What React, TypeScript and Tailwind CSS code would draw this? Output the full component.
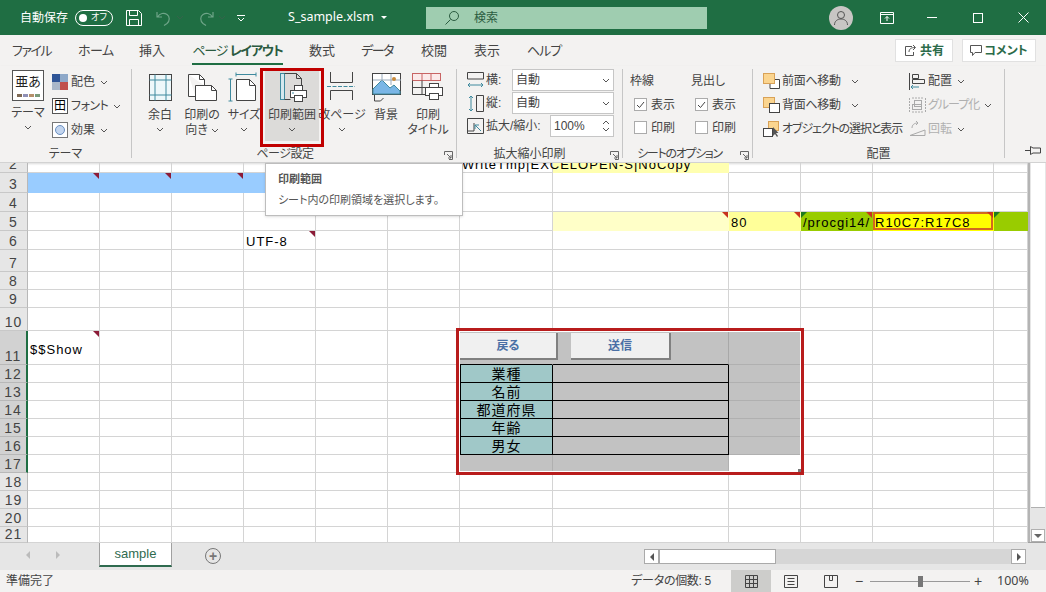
import type { ReactNode } from "react";

const ink = "#444";

function Chev({ className = "" }: { className?: string }) {
  return (
    <svg width="8" height="5" viewBox="0 0 8 5" className={className}>
      <path d="M1 1l3 3 3-3" fill="none" stroke="#555" strokeWidth="1" />
    </svg>
  );
}

function Launcher() {
  return (
    <svg width="9" height="9" viewBox="0 0 9 9" className="absolute right-[3px] bottom-[2px]">
      <path d="M.5 4V.5h8v8H5M3 3l4 4M7 4v3H4" fill="none" stroke="#666" strokeWidth="1" />
    </svg>
  );
}

function Icon({ children, w = 34, h = 34, className = "" }: { children: ReactNode; w?: number; h?: number; className?: string }) {
  return (
    <svg width={w} height={h} viewBox={`0 0 ${w} ${h}`} className={className} fill="none">
      {children}
    </svg>
  );
}

const line = "#444";
const teal = "#3f8a9e";

function MarginIcon() {
  return (
    <Icon>
      <rect x="6.500" y="3.500" width="22" height="26" fill="#eef8fa" stroke={line} />
      <path d="M6.500 9h22M6.500 24h22M12 3.500v26M23 3.500v26" stroke={teal} />
    </Icon>
  );
}
function OrientIcon() {
  return (
    <Icon>
      <path d="M3.500 3.500h11l5 5v6M3.500 3.500v22h7" stroke={line} fill="#fff" />
      <path d="M10.500 14.500h16l5 5v10h-21z" fill="#fff" stroke={line} />
      <path d="M26.500 14.500v5h5M14.500 3.500v5h5" stroke={line} />
    </Icon>
  );
}
function SizeIcon() {
  return (
    <Icon>
      <path d="M9.500 8.500h13l6 6v15h-19z" fill="#fff" stroke={line} />
      <path d="M22.500 8.500v6h6" stroke={line} />
      <path d="M9 3.500h20M9 1.500v4M29 1.500v4M3.500 8v22M1.500 8h4M1.500 30h4" stroke={teal} />
    </Icon>
  );
}
function AreaIcon() {
  return (
    <Icon>
      <rect x="5.500" y="2.500" width="4" height="26" fill="#d4e8ee" stroke={teal} />
      <path d="M9.500 2.500h12l5 5v11M9.500 28.500h6" stroke={line} />
      <path d="M21.500 2.500v5h5" stroke={line} />
      <rect x="19.500" y="14.500" width="8" height="5" fill="#fff" stroke={line} />
      <rect x="15.500" y="19.500" width="16" height="7" fill="#fff" stroke={line} />
      <rect x="19.500" y="24.500" width="8" height="6" fill="#fff" stroke={line} />
      <path d="M17 22h2" stroke={teal} />
    </Icon>
  );
}
function BreakIcon() {
  return (
    <Icon>
      <path d="M5.500 1v10.500h22V1M5.500 29V19.500h22V29" stroke={line} />
      <path d="M2 15.500h28" stroke={teal} strokeDasharray="4 1.500" />
    </Icon>
  );
}
function BackgroundIcon() {
  return (
    <Icon>
      <path d="M5.500 24v6h6l3-3" stroke={line} />
      <rect x="3.500" y="2.500" width="28" height="21" fill="#fff" stroke={line} />
      <path d="M4 23V18l9-9 8 8 4-3 6 6v3z" fill="#7ab6e6" stroke={teal} />
      <path d="M13 3v7M22 3v11M4 9h28" stroke="#9ab" />
      <circle cx="25" cy="8" r="2" fill="#c98a3a" />
    </Icon>
  );
}
function TitlesIcon() {
  return (
    <Icon>
      <rect x="1.500" y="2.500" width="28" height="7" fill="#fbeaea" stroke="#c86464" />
      <path d="M11 2.500v7M20 2.500v7" stroke="#c86464" />
      <path d="M1.500 9.500v14h14M11 9.500v14M1.500 16.500h14" stroke={line} />
      <rect x="14.500" y="16.500" width="17" height="8" fill="#fff" stroke={line} />
      <rect x="18.500" y="12.500" width="9" height="4" fill="#fff" stroke={line} />
      <rect x="18.500" y="22.500" width="9" height="6" fill="#fff" stroke={line} />
    </Icon>
  );
}

function BigButton({ icon, lines, chev, inlineChev, className = "" }: { icon: ReactNode; lines: string[]; chev?: boolean; inlineChev?: boolean; className?: string }) {
  return (
    <div className={`flex h-[71px] flex-col items-center ${className}`}>
      <div className="flex h-[38px] items-start pt-[1px]">{icon}</div>
      {lines.map((l, i) => (
        <div key={l} className="flex items-center whitespace-nowrap text-[12px] leading-[15px]">
          {l}
          {inlineChev && i === lines.length - 1 && <Chev className="ml-[3px]" />}
        </div>
      ))}
      {chev && <Chev className="mt-[4px]" />}
    </div>
  );
}

function Group({ className, label, labelCls = "", launcher, children }: { className: string; label?: string; labelCls?: string; launcher?: boolean; children: ReactNode }) {
  return (
    <div className={`relative flex flex-col ${className}`}>
      <div className="h-[81px]">{children}</div>
      {label && <div className={`text-center text-[12px] leading-[14px] whitespace-nowrap ${labelCls}`}>{label}</div>}
      {launcher && <Launcher />}
    </div>
  );
}

function Sep() {
  return <div className="mt-[3px] h-[89px] w-px shrink-0 bg-[#c6c6c6]" />;
}

function SmallRow({ icon, text, textCls = "", chev = true, muted = false, chevGap = "ml-[5px]" }: { icon: ReactNode; text: string; textCls?: string; chev?: boolean; muted?: boolean; chevGap?: string }) {
  return (
    <div className={`flex h-[24px] items-center text-[12px] ${muted ? "text-[#b0b0b0]" : ""}`}>
      <div className="flex w-[19px] shrink-0 justify-start">{icon}</div>
      <span className={`whitespace-nowrap ${textCls}`}>{text}</span>
      {chev && <Chev className={chevGap} />}
    </div>
  );
}

function Check({ label, checked }: { label: string; checked?: boolean }) {
  return (
    <div className="flex h-[23px] items-center text-[12px]">
      <div className="mr-[4px] flex h-[13px] w-[13px] items-center justify-center border border-[#ababab] bg-white">
        {checked && (
          <svg width="9" height="8" viewBox="0 0 9 8">
            <path d="M1 4l2.500 2.500L8 1" fill="none" stroke="#444" />
          </svg>
        )}
      </div>
      {label}
    </div>
  );
}

function Select({ text }: { text: string }) {
  return (
    <div className="flex h-[22px] w-[102px] items-center justify-between border border-[#c6c6c6] bg-white px-[3px] text-[12px]">
      {text}
      <Chev />
    </div>
  );
}

function TitleBar() {
  return (
    <div className="flex h-[35px] items-center bg-[#1f6e43] text-white">
      <span className="ml-[20px] text-[12px]">自動保存</span>
      <div className="ml-[7px] flex h-[16px] w-[38px] items-center rounded-full border border-white px-[3px]">
        <div className="h-[8px] w-[8px] rounded-full bg-white" />
        <span className="ml-[4px] text-[9px] leading-none">オフ</span>
      </div>
      <svg width="16" height="16" viewBox="0 0 16 16" className="ml-[13px]" fill="none" stroke="#fff">
        <path d="M.5.500h12l3 3v12H.5zM3.500.500v5h8v-5M3.500 15.500v-6h9v6" />
      </svg>
      <svg width="18" height="16" viewBox="0 0 18 16" className="ml-[13px]" fill="none" stroke="#6ea488" strokeWidth="1.200">
        <path d="M2 2v5h5M2.500 7C5 3 9 2.500 12 4.500s3 6.500 0 9l-3 2" />
      </svg>
      <Chev className="ml-[3px] opacity-40" />
      <svg width="18" height="16" viewBox="0 0 18 16" className="ml-[13px]" fill="none" stroke="#6ea488" strokeWidth="1.200">
        <path d="M16 2v5h-5M15.500 7C13 3 9 2.500 6 4.500s-3 6.500 0 9l3 2" />
      </svg>
      <Chev className="ml-[3px] opacity-40" />
      <svg width="8" height="8" viewBox="0 0 8 8" className="ml-[11px]" fill="none" stroke="#fff">
        <path d="M0 1.500h8M1 4l3 3 3-3" />
      </svg>
      <div className="ml-[43px] flex w-[101px] items-center justify-between font-['Noto_Sans',sans-serif] text-[12.500px] whitespace-nowrap">
        S_sample.xlsm
        <div className="mr-[2px] h-0 w-0 border-x-[3px] border-t-[3px] border-x-transparent border-t-white" />
      </div>
      <div className="ml-[37px] flex h-[22px] w-[281px] items-center bg-[#9fcdb0] text-[#2b5c40]">
        <svg width="16" height="16" viewBox="0 0 16 16" className="ml-[18px]" fill="none" stroke="#2b5c40">
          <circle cx="10" cy="6" r="4.500" />
          <path d="M6.500 9.500L1.500 14.500" />
        </svg>
        <span className="ml-[14px] text-[12px]">検索</span>
      </div>
      <div className="ml-[122px] flex h-[24px] w-[24px] items-center justify-center rounded-full bg-[#c8c6c4]">
        <svg width="16" height="16" viewBox="0 0 16 16" fill="none" stroke="#555">
          <circle cx="8" cy="5" r="3.500" />
          <path d="M1.500 15c0-4 3-6 6.500-6s6.500 2 6.500 6" />
        </svg>
      </div>
      <svg width="14" height="12" viewBox="0 0 14 12" className="ml-[27px]" fill="none" stroke="#fff">
        <path d="M.5.500h13v11H.5zM.5 2.500h13M7 9V4.500M5 6.500l2-2 2 2" />
      </svg>
      <div className="ml-[33px] h-px w-[10px] bg-white" />
      <div className="ml-[36px] h-[10px] w-[10px] border border-white" />
      <svg width="11" height="11" viewBox="0 0 11 11" className="ml-[35px]" stroke="#fff">
        <path d="M.5.500l10 10M10.500.500l-10 10" />
      </svg>
    </div>
  );
}

const tabs = [
  { t: "ファイル", w: "ml-[12px] w-[38px] tracking-[-1.500px]" },
  { t: "ホーム", w: "ml-[28px] w-[34px] tracking-[-0.500px]" },
  { t: "挿入", w: "ml-[27px] w-[26px]" },
  { t: "数式", w: "ml-[26px] w-[26px]" },
  { t: "データ", w: "ml-[26px] w-[32px] tracking-[-1.500px]" },
  { t: "校閲", w: "ml-[28px] w-[26px]" },
  { t: "表示", w: "ml-[27px] w-[26px]" },
  { t: "ヘルプ", w: "ml-[27px] w-[33px] tracking-[-1px]" },
];

function TabItem({ t, w }: { t: string; w: string }) {
  return <div className={`text-center text-[13px] whitespace-nowrap ${w}`}>{t}</div>;
}

function TabRow() {
  return (
    <div className="flex h-[31px] items-center bg-[#f3f2f1]">
      {tabs.slice(0, 3).map((x) => (
        <TabItem key={x.t} {...x} />
      ))}
      <div className="relative ml-[27px] flex w-[91px] justify-center text-[13px] tracking-[-1.200px] whitespace-nowrap text-[#2a5a40]">
        ページ&nbsp;<b className="font-bold">レイアウト</b>
        <div className="absolute right-0 bottom-[-5px] left-0 h-[2px] bg-[#1f6e43]" />
      </div>
      {tabs.slice(3).map((x) => (
        <TabItem key={x.t} {...x} />
      ))}
      <div className="ml-auto flex h-[23px] w-[58px] items-center justify-center gap-[3px] border border-[#e1e1e1] bg-white text-[12px] font-bold text-[#2c6b4a]">
        <svg width="13" height="13" viewBox="0 0 13 13" fill="none" stroke="#555">
          <path d="M8 2.500H1.500v9h8V8M5 8c0-3 2-4.500 6-4.500M9 1l2.500 2.500L9 6" />
        </svg>
        共有
      </div>
      <div className="mr-[10px] ml-[9px] flex h-[23px] w-[74px] items-center justify-center gap-[2px] border border-[#e1e1e1] bg-white text-[12px] font-bold text-[#2c6b4a]">
        <svg width="12" height="12" viewBox="0 0 12 12" fill="none" stroke="#555">
          <path d="M.5.500h11v7H5L2.500 10.500v-3h-2z" />
        </svg>
        コメント
      </div>
    </div>
  );
}

function Ribbon() {
  return (
    <div className="flex h-[97px] border-b border-[#d2d2d2] bg-[#f3f2f1] shadow-[0_1px_2px_rgba(0,0,0,0.15)]">
      <Group className="w-[131px]" label="テーマ">
        <div className="flex pt-[4px]">
          <div className="ml-[8px] flex w-[40px] flex-col items-center">
            <div className="flex h-[31px] w-[32px] flex-col items-center justify-between border border-[#555] bg-white pt-[4px] pb-[3px] text-[13px] leading-none text-[#222]">
              亜あ
              <div className="flex gap-px">
                <div className="h-[3px] w-[5px] bg-[#7f6a55]" />
                <div className="h-[3px] w-[5px] bg-[#8f8fb5]" />
                <div className="h-[3px] w-[5px] bg-[#b58f6a]" />
                <div className="h-[3px] w-[5px] bg-[#7a9a7a]" />
              </div>
            </div>
            <div className="mt-[5px] text-[12px] leading-[15px]">テーマ</div>
            <Chev className="mt-[4px]" />
          </div>
          <div className="ml-[4px]">
            <SmallRow
              text="配色"
              icon={
                <svg width="16" height="16" viewBox="0 0 16 16">
                  <rect width="8" height="8" fill="#2f5597" />
                  <rect x="8" width="8" height="8" fill="#8ea9c9" />
                  <rect y="8" width="8" height="8" fill="#a9b7c9" />
                  <rect x="8" y="8" width="8" height="8" fill="#c0504d" />
                </svg>
              }
            />
            <SmallRow
              text="フォント"
              textCls="tracking-[-0.500px]"
              icon={
                <div className="flex h-[16px] w-[16px] items-center justify-center border border-[#555] bg-white text-[12px] leading-none text-black">田</div>
              }
            />
            <SmallRow
              text="効果"
              icon={
                <div className="flex h-[16px] w-[16px] items-center justify-center border border-[#777] bg-white">
                  <div className="h-[10px] w-[10px] rounded-full border border-[#6a8fc0] bg-[#c3d5ee]" />
                </div>
              }
            />
          </div>
        </div>
      </Group>
      <Sep />
      <Group className="w-[324px]" label="ページ設定" labelCls="pr-[18px] tracking-[-0.500px]" launcher>
        <div className="flex pt-[4px] pl-[7px]">
          <BigButton className="w-[42px]" icon={<MarginIcon />} lines={["余白"]} chev />
          <BigButton className="w-[42px]" icon={<OrientIcon />} lines={["印刷の", "向き"]} inlineChev />
          <BigButton className="w-[42px]" icon={<SizeIcon />} lines={["サイズ"]} chev />
          <BigButton className="w-[54px] bg-[#dcdbd9]" icon={<AreaIcon />} lines={["印刷範囲"]} chev />
          <BigButton className="w-[46px]" icon={<BreakIcon />} lines={["改ページ"]} chev />
          <BigButton className="w-[42px]" icon={<BackgroundIcon />} lines={["背景"]} />
          <BigButton className="w-[42px]" icon={<TitlesIcon />} lines={["印刷", "タイトル"]} />
        </div>
      </Group>
      <Sep />
      <Group className="w-[165px]" label="拡大縮小印刷" labelCls="pr-[20px]" launcher>
        <div className="flex flex-col gap-px pt-[3px] pr-[8px] pl-[10px] text-[12px]">
          <div className="flex h-[22px] items-center justify-between">
            <div className="flex items-center gap-[2px]">
              <svg width="17" height="17" viewBox="0 0 17 17" fill="none">
                <path d="M.5 7V.5h16V7M.5 7h16" stroke={line} />
                <path d="M1 13h15M3 11l-2 2 2 2M14 11l2 2-2 2" stroke={teal} />
              </svg>
              横:
            </div>
            <Select text="自動" />
          </div>
          <div className="flex h-[22px] items-center justify-between">
            <div className="flex items-center gap-[2px]">
              <svg width="17" height="17" viewBox="0 0 17 17" fill="none">
                <path d="M9.500.500h7v16h-7z" stroke={line} />
                <path d="M4 1v15M2 3l2-2 2 2M2 14l2 2 2-2" stroke={teal} />
              </svg>
              縦:
            </div>
            <Select text="自動" />
          </div>
          <div className="flex h-[22px] items-center justify-between">
            <div className="flex items-center gap-[2px]">
              <svg width="17" height="17" viewBox="0 0 17 17" fill="none">
                <path d="M.5.500h16v15H.5zM7 5v8h-6" stroke={line} />
                <path d="M14 13L8 7M8 11V7h4" stroke={teal} />
              </svg>
              拡大/縮小:
            </div>
            <div className="flex h-[22px] w-[64px] items-center justify-between border border-[#c6c6c6] bg-white pr-[3px] pl-[3px]">
              100%
              <div className="flex flex-col gap-[2px]">
                <Chev className="rotate-180" />
                <Chev />
              </div>
            </div>
          </div>
        </div>
      </Group>
      <Sep />
      <Group className="w-[129px]" label="シートのオプション" labelCls="pr-[16px] tracking-[-1.300px]" launcher>
        <div className="flex pt-[5px] pl-[7px] text-[12px]">
          <div className="w-[61px]">
            <div className="h-[22px] leading-[20px]">枠線</div>
            <div className="pl-[4px]">
              <Check label="表示" checked />
              <Check label="印刷" />
            </div>
          </div>
          <div>
            <div className="h-[22px] leading-[20px]">見出し</div>
            <div className="pl-[4px]">
              <Check label="表示" checked />
              <Check label="印刷" />
            </div>
          </div>
        </div>
      </Group>
      <Sep />
      <Group className="w-[251px]" label="配置">
        <div className="flex pt-[3px] pl-[10px]">
          <div className="w-[146px]">
            <SmallRow
              text="前面へ移動"
              chevGap="ml-[10px]"
              textCls="tracking-[-0.300px]"
              icon={
                <svg width="17" height="17" viewBox="0 0 17 17" fill="none">
                  <path d="M7 6.500h9.500v9H7z" fill="#fff" stroke={line} />
                  <rect x=".5" y=".5" width="11" height="10" fill="#fbd58f" stroke="#d9a257" />
                </svg>
              }
            />
            <SmallRow
              text="背面へ移動"
              chevGap="ml-[10px]"
              textCls="tracking-[-0.300px]"
              icon={
                <svg width="17" height="17" viewBox="0 0 17 17" fill="none">
                  <rect x=".5" y=".5" width="11" height="10" fill="#fbd58f" stroke="#d9a257" />
                  <rect x="6.500" y="6.500" width="10" height="9" fill="#fff" stroke={line} />
                </svg>
              }
            />
            <SmallRow
              text="オブジェクトの選択と表示"
              textCls="tracking-[-1.100px]"
              chev={false}
              icon={
                <svg width="17" height="17" viewBox="0 0 17 17" fill="none">
                  <rect x="5.500" y=".5" width="10" height="9" fill="#fbd58f" stroke="#d9a257" />
                  <rect x=".5" y="7.500" width="9" height="8" fill="#fff" stroke={line} />
                  <path d="M10 6v9l2-2 2 3 1-1-2-3h2.500z" fill="#555" />
                </svg>
              }
            />
          </div>
          <div>
            <SmallRow
              text="配置"
              icon={
                <svg width="17" height="17" viewBox="0 0 17 17" fill="none">
                  <path d="M.5 0v17" stroke={line} />
                  <path d="M3.500 1.500h6v4h-6zM3.500 6.500h12v4h-12z" stroke={line} />
                  <path d="M2 14h8M4 12l-2 2 2 2" stroke={teal} />
                </svg>
              }
            />
            <SmallRow
              text="グループ化"
              textCls="tracking-[-1px]"
              muted
              icon={
                <svg width="17" height="17" viewBox="0 0 17 17" fill="none" stroke="#aaa">
                  <path d="M.5 1v15M16.500 1v15M3 1h11M3 15h11" strokeDasharray="2 1" />
                  <rect x="5.500" y="3.500" width="7" height="6" />
                  <rect x="3.500" y="7.500" width="9" height="5" />
                </svg>
              }
            />
            <SmallRow
              text="回転"
              muted
              icon={
                <svg width="17" height="17" viewBox="0 0 17 17" fill="none" stroke="#aaa">
                  <path d="M1 14.500h15V9zM3 7c0-3 2-5 6-5M7 0l2 2-2 2" />
                </svg>
              }
            />
          </div>
        </div>
      </Group>
      <Sep />
      <div className="relative flex-1">
        <svg width="17" height="11" viewBox="0 0 17 11" className="absolute right-[4px] bottom-[6px]" fill="none" stroke="#444">
          <path d="M0 5.500h5M5.500 1.500v8L8 8h7.500V3H8z" />
        </svg>
      </div>
    </div>
  );
}

const cols = [72, 72, 72, 72, 72, 72, 93, 176, 72, 72, 121, 34];

const rows = [
  { n: 2, h: "h-[10px]" },
  { n: 3, h: "h-[20px]" },
  { n: 4, h: "h-[19px]" },
  { n: 5, h: "h-[19px]" },
  { n: 6, h: "h-[19px]" },
  { n: 7, h: "h-[22px]" },
  { n: 8, h: "h-[18px]" },
  { n: 9, h: "h-[18px]" },
  { n: 10, h: "h-[23px]" },
  { n: 11, h: "h-[34px]", sel: true },
  { n: 12, h: "h-[18px]", sel: true },
  { n: 13, h: "h-[18px]", sel: true },
  { n: 14, h: "h-[18px]", sel: true },
  { n: 15, h: "h-[18px]", sel: true },
  { n: 16, h: "h-[18px]", sel: true },
  { n: 17, h: "h-[18px]", sel: true },
  { n: 18, h: "h-[18px]" },
  { n: 19, h: "h-[18px]" },
  { n: 20, h: "h-[18px]" },
  { n: 21, h: "h-[16px]" },
];

type CellInfo = { cls?: string; text?: string; textCls?: string; center?: boolean; red?: boolean; green?: boolean; dark?: boolean; sel?: boolean };

const grayLined = "bg-[#c2c2c2] border-[#b0b0b0]";
const teal2 = "bg-[#a0c8c8] border-black border-l";
const grayBlack = "bg-[#c2c2c2] border-black";
const formText = "bottom-0 text-[14px]";

const cells: Record<string, CellInfo> = {
  "2-6": { text: "WriteTmp|EXCELOPEN-S|NoCopy" },
  "2-7": { cls: "bg-[#ffffb0] border-[#ffffb0]" },
  "3-0": { cls: "bg-[#99ccff] border-[#99ccff]", dark: true },
  "3-1": { cls: "bg-[#99ccff] border-[#99ccff]", dark: true },
  "3-2": { cls: "bg-[#99ccff] border-[#99ccff]", dark: true },
  "3-3": { cls: "bg-[#99ccff] border-[#99ccff]" },
  "5-7": { cls: "bg-[#ffffc8] border-[#ffffc8]", red: true },
  "5-8": { cls: "bg-[#ffff99] border-[#ffff99]", text: "80", red: true },
  "5-9": { cls: "bg-[#99cc00] border-[#99cc00]", text: "/procgi14/", red: true, green: true },
  "5-10": { cls: "bg-[#ffff00] border-[#ffff00]", text: "R10C7:R17C8", textCls: "tracking-[0.400px]", red: true, sel: true },
  "5-11": { cls: "bg-[#99cc00] border-[#99cc00]", green: true },
  "6-3": { text: "UTF-8", dark: true },
  "11-0": { text: "$$Show", textCls: "bottom-[6px]", dark: true },
  "11-6": { cls: "bg-[#c2c2c2] border-black border-r-[#c2c2c2]" },
  "11-7": { cls: "bg-[#c2c2c2] border-black border-r-[#a8a8a8]" },
  "11-8": { cls: grayLined },
  "12-6": { cls: teal2, text: "業種", textCls: formText, center: true },
  "12-7": { cls: grayBlack },
  "12-8": { cls: grayLined },
  "13-6": { cls: teal2, text: "名前", textCls: formText, center: true },
  "13-7": { cls: grayBlack },
  "13-8": { cls: grayLined },
  "14-6": { cls: teal2, text: "都道府県", textCls: formText, center: true },
  "14-7": { cls: grayBlack },
  "14-8": { cls: grayLined },
  "15-6": { cls: teal2, text: "年齢", textCls: formText, center: true },
  "15-7": { cls: grayBlack },
  "15-8": { cls: grayLined },
  "16-6": { cls: teal2, text: "男女", textCls: formText, center: true },
  "16-7": { cls: grayBlack },
  "16-8": { cls: grayLined },
  "17-6": { cls: grayLined },
  "17-7": { cls: grayLined },
};

function Corner({ className }: { className: string }) {
  return <div className={`absolute top-0 h-[6px] w-[6px] ${className}`} />;
}

function Cell({ info }: { info?: CellInfo }) {
  const color = info?.cls ?? "border-[#d4d4d4]";
  return (
    <div className={`relative flex items-end overflow-visible border-r border-b ${color} ${info?.center ? "justify-center" : "pl-[2px]"}`}>
      {info?.text && (
        <span className={`absolute z-10 text-[13px] leading-[16px] tracking-[1px] whitespace-nowrap text-black ${info.textCls?.includes("bottom") ? "" : "bottom-[-1px]"} ${info.textCls ?? ""}`}>
          {info.text}
        </span>
      )}
      {info?.sel && <div className="absolute inset-0 z-10 border-2 border-[#d2691e]" />}
      {info?.green && <Corner className="left-0 z-20 bg-[#1f7a1f] [clip-path:polygon(0_0,100%_0,0_100%)]" />}
      {info?.red && <Corner className="right-0 z-20 bg-[#c8321e] [clip-path:polygon(0_0,100%_0,100%_100%)]" />}
      {info?.dark && <Corner className="right-0 z-20 bg-[#8c1c38] [clip-path:polygon(0_0,100%_0,100%_100%)]" />}
    </div>
  );
}

function Sheet() {
  return (
    <div className="flex h-[379px]">
      <div className="w-[1028px] shrink-0">
        {rows.map((r) => (
          <div key={r.n} className={`flex overflow-hidden ${r.h}`}>
            <div
              className={`flex w-[28px] shrink-0 items-end justify-center border-b text-[14px] leading-[16px] tracking-[1px] text-[#444] ${
                r.sel ? "border-[#b8b8b8] border-r-2 border-r-[#1f6e43] bg-[#d2d2d2]" : "border-[#c8c8c8] border-r border-r-[#b8b8b8] bg-[#e6e6e6]"
              }`}
            >
              {r.n}
            </div>
            <div className="grid flex-1 grid-cols-[72px_72px_72px_72px_72px_72px_93px_176px_72px_72px_121px_34px]">
              {cols.map((_, i) => (
                <Cell key={i} info={cells[`${r.n}-${i}`]} />
              ))}
            </div>
          </div>
        ))}
      </div>
      <div className="flex w-[18px] flex-col border-l-[2px] border-[#b4b4b4] bg-[#e6e6e6]">
        <div className="mx-px h-[345px] border-b border-[#b0b0b0] bg-white" />
        <div className="flex-1" />
        <div className="mx-px flex h-[13px] items-center justify-center border border-[#b0b0b0] bg-white">
          <div className="h-0 w-0 border-x-[4px] border-t-[4px] border-x-transparent border-t-[#666]" />
        </div>
      </div>
    </div>
  );
}

function TabStrip() {
  return (
    <div className="flex h-[28px] border-t border-[#a0a0a0] bg-[#e6e6e6]">
      <div className="flex w-[99px] items-start justify-start pt-[8px] pl-[26px]">
        <div className="h-0 w-0 border-y-[4px] border-r-[4px] border-y-transparent border-r-[#bbb]" />
        <div className="ml-[26px] h-0 w-0 border-y-[4px] border-l-[4px] border-y-transparent border-l-[#bbb]" />
      </div>
      <div className="-mt-px flex h-[25px] w-[73px] items-center justify-center border-x border-b-2 border-[#a0a0a0] border-b-[#2f6b4f] bg-white text-[13px] text-[#2f6b4f]">
        sample
      </div>
      <div className="ml-[33px] flex h-[16px] w-[16px] translate-y-[5px] items-center justify-center rounded-full border-[1.500px] border-[#777] text-[14px] leading-none font-bold text-[#777]">
        +
      </div>
      <div className="ml-[423px] flex h-[15px] w-[382px] translate-y-[6px] items-center bg-[#d6d6d6]">
        <div className="flex h-full w-[15px] items-center justify-center border border-[#aaa] bg-white">
          <div className="h-0 w-0 border-y-[4px] border-r-[4px] border-y-transparent border-r-[#555]" />
        </div>
        <div className="h-full w-[117px] border border-[#aaa] bg-white" />
        <div className="flex-1" />
        <div className="flex h-full w-[15px] items-center justify-center border border-[#aaa] bg-white">
          <div className="h-0 w-0 border-y-[4px] border-l-[4px] border-y-transparent border-l-[#555]" />
        </div>
      </div>
    </div>
  );
}

function StatusBar() {
  return (
    <div className="flex h-[22px] items-center bg-[#f3f2f1] text-[12px]">
      <span className="ml-[6px]">準備完了</span>
      <span className="ml-auto tracking-[-0.300px]">データの個数: 5</span>
      <div className="ml-[20px] flex h-full w-[40px] items-center justify-center bg-[#cdcdcb]">
        <svg width="13" height="13" viewBox="0 0 13 13" fill="none" stroke="#444">
          <path d="M.5.500h12v12H.5zM.5 4.500h12M.5 8.500h12M4.500.500v12M8.500.500v12" />
        </svg>
      </div>
      <div className="flex h-full w-[40px] items-center justify-center">
        <svg width="14" height="13" viewBox="0 0 14 13" fill="none" stroke="#444">
          <path d="M.5.500h13v12H.5zM3.500 3.500h7M3.500 6.500h7M3.500 9.500h7" />
        </svg>
      </div>
      <div className="flex h-full w-[40px] items-center justify-center">
        <svg width="14" height="13" viewBox="0 0 14 13" fill="none" stroke="#444">
          <path d="M.5.500h13v12H.5zM5.500.500v5h3v-5" />
        </svg>
      </div>
      <span className="ml-[4px] w-[7px] text-[14px] leading-none">−</span>
      <div className="relative ml-[8px] h-px w-[100px] bg-[#999]">
        <div className="absolute top-[-5px] left-[48px] h-[11px] w-[5px] bg-[#777]" />
      </div>
      <span className="ml-[4px] w-[14px] text-[14px] leading-none">+</span>
      <span className="mr-[17px] ml-[9px] w-[32px] font-['Noto_Sans',sans-serif] text-[12.500px] whitespace-nowrap">100%</span>
    </div>
  );
}

export default function App() {
  return (
    <div
      className="relative h-[592px] w-[1046px] overflow-hidden bg-white font-['Liberation_Sans','Noto_Sans_CJK_JP',sans-serif] [font-feature-settings:'palt']"
      style={{ color: ink }}
    >
      <TitleBar />
      <TabRow />
      <Ribbon />
      <Sheet />
      <TabStrip />
      <StatusBar />

      {/* annotation around the print area button */}
      <div className="absolute top-[68px] left-[260px] h-[79px] w-[64px] border-[3px] border-[#c00000]" />

      {/* tooltip */}
      <div className="absolute top-[163px] left-[265px] z-30 h-[53px] w-[198px] border border-[#bdbdbd] bg-white px-[12px] pt-[6px] text-[11px] text-[#555] shadow-sm">
        <div className="font-bold leading-[18px]">印刷範囲</div>
        <div className="mt-[4px] leading-[16px]">シート内の印刷領域を選択します。</div>
      </div>

      {/* shapes floating over the sheet */}
      <div className="absolute top-[333px] left-[460px] z-20 flex h-[27px] w-[98px] items-center justify-center border-r-2 border-b-2 border-[#808080] bg-[#f0f0f0] text-[12px] font-bold text-[#4a6fa5]">戻る</div>
      <div className="absolute top-[333px] left-[571px] z-20 flex h-[27px] w-[100px] items-center justify-center border-r-2 border-b-2 border-[#808080] bg-[#f0f0f0] text-[12px] font-bold text-[#4a6fa5]">送信</div>
      <div className="absolute top-[328px] left-[456px] z-20 h-[147px] w-[348px] border-[3px] border-[#b81c1c]">
        <div className="h-full w-full border border-white" />
        <div className="absolute right-0 bottom-0 h-[3px] w-[3px] bg-[#777]" />
      </div>
    </div>
  );
}
